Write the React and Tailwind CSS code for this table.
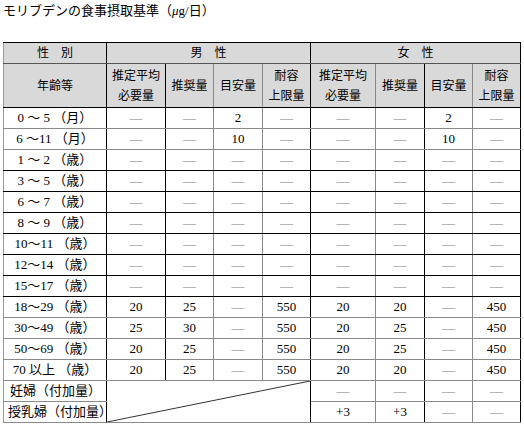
import React from 'react';

// right border colour of each column
const colLine = ['border-r-[#000]', 'border-r-[#000]', 'border-r-[#8a8a8a]', 'border-r-[#8a8a8a]', 'border-r-[#000]', 'border-r-[#8a8a8a]', 'border-r-[#000]', 'border-r-[#8a8a8a]', 'border-r-[#000]'];
const colW = ['w-[103px]', 'w-[59px]', 'w-[48px]', 'w-[49px]', 'w-[48px]', 'w-[65px]', 'w-[49px]', 'w-[48px]', 'w-[48px]'];

const D = '—';

const rows = [
  ['0 ～ 5 （月）', D, D, '2', D, D, D, '2', D],
  ['6 ～11 （月）', D, D, '10', D, D, D, '10', D],
  ['1 ～ 2 （歳）', D, D, D, D, D, D, D, D],
  ['3 ～ 5 （歳）', D, D, D, D, D, D, D, D],
  ['6 ～ 7 （歳）', D, D, D, D, D, D, D, D],
  ['8 ～ 9 （歳）', D, D, D, D, D, D, D, D],
  ['10～11 （歳）', D, D, D, D, D, D, D, D],
  ['12～14 （歳）', D, D, D, D, D, D, D, D],
  ['15～17 （歳）', D, D, D, D, D, D, D, D],
  ['18～29 （歳）', '20', '25', D, '550', '20', '20', D, '450'],
  ['30～49 （歳）', '25', '30', D, '550', '20', '25', D, '450'],
  ['50～69 （歳）', '20', '25', D, '550', '20', '25', D, '450'],
  ['70 以上 （歳）', '20', '25', D, '550', '20', '20', D, '450'],
];

const rowLine = (i) => (i <= 1 || i >= 9 ? 'border-b-[#8a8a8a]' : 'border-b-[#000]');

const font = { fontFamily: '"Liberation Serif", "Noto Sans CJK JP", serif' };

function Val({ v }) {
  if (v === D) return <span className="text-[#7a7a7a]">—</span>;
  return <span>{v}</span>;
}

export default function App() {
  const head = 'bg-[#d9d9d9] text-center align-middle font-normal text-[12px] leading-[20px] border-r border-b';
  const cell = 'text-center align-middle text-[13px] leading-[20px] border-r border-b h-[21px] p-0 whitespace-nowrap';

  return (
    <div className="w-[524px] h-[427px] bg-white text-black overflow-hidden" style={font}>
      <div className="pl-[3px] pt-[3px] text-[13px] leading-[16px]">モリブデンの食事摂取基準（<i>μ</i>g/日）</div>
      <table className="mt-[23px] ml-[3px] border-collapse table-fixed w-[517px] border-t border-t-[#000] border-l border-l-[#9a9a9a]">
        <colgroup>
          {colW.map((w, i) => <col key={i} className={w} />)}
        </colgroup>
        <thead>
          <tr>
            <th className={`${head} h-[21px] p-0 border-r-[#000] border-b-[#555]`}>性　別</th>
            <th colSpan={4} className={`${head} h-[21px] p-0 border-r-[#000] border-b-[#555]`}>男　性</th>
            <th colSpan={4} className={`${head} h-[21px] p-0 border-r-[#000] border-b-[#555]`}>女　性</th>
          </tr>
          <tr>
            <th className={`${head} h-[44px] p-0 border-r-[#000] border-b-[#000]`}>年齢等</th>
            {[
              ['推定平均', '必要量'], ['推奨量'], ['目安量'], ['耐容', '上限量'],
              ['推定平均', '必要量'], ['推奨量'], ['目安量'], ['耐容', '上限量'],
            ].map((t, i) => (
              <th key={i} className={`${head} h-[44px] p-0 ${colLine[i + 1]} border-b-[#000]`}>
                {t.map((s) => <div key={s}>{s}</div>)}
              </th>
            ))}
          </tr>
        </thead>
        <tbody>
          {rows.map((r, i) => (
            <tr key={i}>
              {r.map((v, j) => (
                <td key={j} className={`${cell} ${colLine[j]} ${rowLine(i)} ${j === 0 ? 'text-[12px]' : ''}`}>
                  {j === 0 ? v : <Val v={v} />}
                </td>
              ))}
            </tr>
          ))}
          <tr>
            <td className={`${cell} text-[11.5px] text-left pl-[6px] ${colLine[0]} border-b-[#8a8a8a]`}>妊婦（付加量）</td>
            <td rowSpan={2} colSpan={4} className="relative p-0 border-r border-b border-r-[#000] border-b-[#8a8a8a]">
              <svg className="absolute inset-0 w-full h-full" viewBox="0 0 100 100" preserveAspectRatio="none">
                <line x1="0" y1="100" x2="100" y2="0" stroke="#333" strokeWidth="1" vectorEffect="non-scaling-stroke" />
              </svg>
            </td>
            {[D, D, D, D].map((v, k) => (
              <td key={k} className={`${cell} ${colLine[k + 5]} border-b-[#8a8a8a]`}><Val v={v} /></td>
            ))}
          </tr>
          <tr>
            <td className={`${cell} text-[11.5px] text-left pl-[4px] ${colLine[0]} border-b-[#8a8a8a]`}>授乳婦（付加量）</td>
            {['+3', '+3', D, D].map((v, k) => (
              <td key={k} className={`${cell} ${colLine[k + 5]} border-b-[#8a8a8a]`}><Val v={v} /></td>
            ))}
          </tr>
        </tbody>
      </table>
    </div>
  );
}
